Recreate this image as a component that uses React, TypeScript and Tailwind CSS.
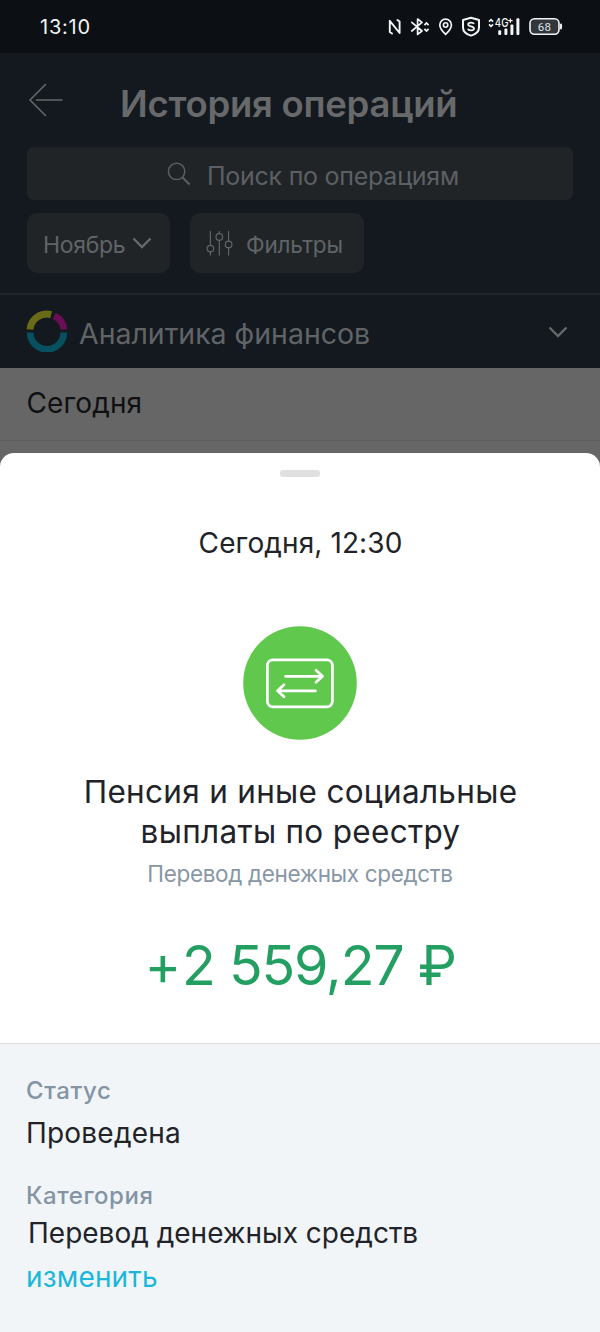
import React from "react";

function StatusIcons() {
  return (
    <svg width="180" height="26" viewBox="385 14 180 26" fill="none" stroke="#f2f4f6" strokeWidth="1.7" className="ml-auto mr-[35px]">
      {/* NFC */}
      <path d="M392 33.6 L389.8 32 V20.8 L399.6 33 V21.6 L397.4 20" strokeLinejoin="round" strokeLinecap="round" strokeWidth="1.9" />
      {/* Bluetooth */}
      <path d="M411.8 22.4 L422 31 L417.6 34.4 V19 L422 22.4 L411.8 31" strokeLinejoin="round" strokeLinecap="round" strokeWidth="1.7" />
      <path d="M424.4 25.2 L426.5 23 L428.6 25.2 M424.4 28.8 L426.5 31 L428.6 28.8" strokeWidth="1.8" />
      {/* Location */}
      <path d="M445.6 34.4 C442 31 439.8 28.3 439.8 25 a5.8 5.8 0 0 1 11.6 0 C451.4 28.3 449.2 31 445.6 34.4 Z" strokeWidth="1.7" />
      <circle cx="445.6" cy="25" r="2.2" strokeWidth="1.6" />
      {/* Shield */}
      <path d="M471 17.8 L479 20 V27.4 C479 31.4 475.6 34.2 471 35.6 C466.4 34.2 463 31.4 463 27.4 V20 Z" strokeWidth="2" strokeLinejoin="round" />
      <path d="M474 24 C473.3 22.2 468.2 22 468.2 24.4 C468.2 27 474 25.8 474 28.6 C474 31 468.6 30.9 468 28.8" strokeWidth="1.7" />
      {/* Signal */}
      <path d="M489 21.6 L491 19.6 L493 21.6 M489 24.4 L491 26.4 L493 24.4" strokeWidth="1.6" />
      <g stroke="none" fill="#f2f4f6">
        <rect x="498.2" y="30.3" width="3" height="4.7" rx="1" />
        <rect x="504.4" y="28.4" width="3" height="6.6" rx="1" />
        <rect x="510.4" y="24.4" width="3" height="10.6" rx="1" />
        <rect x="516.4" y="18.3" width="3" height="16.7" rx="1" />
        <text x="494.8" y="26.8" fontFamily="Inter, sans-serif" fontSize="11.5" fontWeight="500" textLength="13.6" lengthAdjust="spacingAndGlyphs">4G</text>
        <path d="M508.2 20 H512.6 V21.2 H508.2 Z M509.8 18.4 H511 V22.8 H509.8 Z" />
      </g>
      {/* Battery */}
      <rect x="530" y="18.8" width="29" height="15.4" rx="4.4" strokeWidth="1.6" fill="#33373c" />
      <path d="M560.6 23.8 Q562 26.5 560.6 29.2" strokeWidth="2" />
      <text x="544.4" y="30.6" textAnchor="middle" stroke="none" fill="#dfe2e5" fontFamily="Roboto, sans-serif" fontSize="11.5" letterSpacing="0.3">68</text>
    </svg>
  );
}

function Chevron({ className }: { className: string }) {
  return (
    <svg width="20" height="12" viewBox="0 0 20 12" fill="none" strokeWidth="2.3" className={className}>
      <path d="M1.5 1.5 L10 10 L18.5 1.5" stroke="currentColor" />
    </svg>
  );
}

function Header() {
  return (
    <header className="flex flex-col h-[315px] bg-[#14191f]">
      <div className="flex h-[94px] items-center">
        <svg width="36" height="34" viewBox="0 0 36 34" fill="none" stroke="#66696c" strokeWidth="1.5" strokeLinecap="round" className="ml-7">
          <path d="M17.5 1.5 L2 17 L17.5 32.5 M8.5 17 H34" />
        </svg>
        <h1 className="ml-[56px] pt-[7px] text-[36.5px] leading-[40px] font-[580] tracking-[-0.26px] text-[#68696b] whitespace-nowrap">История операций</h1>
      </div>
      <div className="mx-[27px] flex h-[53px] shrink-0 items-center rounded-[7px] bg-[#202427]">
        <svg width="24" height="24" viewBox="0 0 24 24" fill="none" stroke="#5a5d60" className="ml-[140px]">
          <circle cx="9.6" cy="9.4" r="8.2" strokeWidth="1.5" />
          <path d="M15.6 15.6 L22.6 22.4" strokeWidth="2.1" />
        </svg>
        <span className="ml-[16px] pt-[5px] text-[25px] leading-[30px] font-normal tracking-[-0.26px] text-[#5d6063] whitespace-nowrap">Поиск по операциям</span>
      </div>
      <div className="mt-[13px] flex h-[60px] shrink-0 gap-5 px-[27px]">
        <button className="flex w-[143px] items-center rounded-[10px] bg-[#202427] pl-[16px] text-[#67696b]">
          <span className="pt-[4px] text-[23px] leading-[28px] font-normal tracking-[-0.3px] text-[#616467]">Ноябрь</span>
          <Chevron className="ml-[7px]" />
        </button>
        <button className="flex w-[174px] items-center rounded-[10px] bg-[#202427] pl-[16px]">
          <svg width="28" height="27" viewBox="0 0 28 27" fill="none" stroke="#606366" strokeWidth="1.2">
            <path d="M4.4 1 V15.2 M4.4 22 V25.6 M13.3 1 V3.6 M13.3 10.3 V25.6 M22.6 1 V11.2 M22.6 17.6 V25.6" />
            <circle cx="4.4" cy="18.6" r="3.3" />
            <circle cx="13.3" cy="7" r="3.3" />
            <circle cx="22.6" cy="14.4" r="3.3" />
          </svg>
          <span className="ml-[12px] pt-[4px] text-[22.5px] leading-[28px] font-normal tracking-[-0.2px] text-[#616467]">Фильтры</span>
        </button>
      </div>
      <div className="mt-[20px] flex h-[75px] items-center border-t-2 border-[#20252d]">
        <svg width="42" height="42" viewBox="-21 -21 42 42" fill="none" strokeWidth="6.8" className="ml-[26px] mb-[1px]">
          <path d="M-17 -1.5 A16.8 16.8 0 0 1 4.1 -16.4" stroke="#6a6b17" />
          <path d="M7.4 -15.2 A16.8 16.8 0 0 1 17 -1.5" stroke="#6a0f55" />
          <path d="M16.8 1.5 A16.8 16.8 0 0 1 -16.8 1.5" stroke="#06505f" />
        </svg>
        <span className="ml-[11px] pt-[4px] text-[28.5px] leading-[34px] font-normal tracking-[-0.02px] text-[#616467] whitespace-nowrap">Аналитика финансов</span>
        <Chevron className="ml-auto mr-[32px] text-[#67696b]" />
      </div>
    </header>
  );
}

export default function App() {
  return (
    <div className="flex h-[1332px] w-[600px] flex-col overflow-hidden bg-[#666666] font-[Inter,sans-serif]">
      <div className="flex h-[53px] shrink-0 items-center bg-[#0c1014]">
        <span className="pl-[40px] text-[20px] leading-6 font-normal tracking-[0.78px] text-[#f2f4f6]">13:10</span>
        <StatusIcons />
      </div>
      <Header />
      <div className="h-[73px] shrink-0 border-b border-[#5c5c5c] pl-[26.5px] pt-[18px] text-[28px] leading-[34px] font-[380] tracking-[0.1px] text-[#0e1013]">Сегодня</div>
      <main className="mt-[12px] flex flex-1 flex-col overflow-hidden rounded-t-[14px] bg-white text-[#212328]">
        <section className="flex h-[590px] shrink-0 flex-col items-center text-center">
          <div className="mt-[17px] h-[7px] w-10 rounded-[3px] bg-[#e0e0e0]" />
          <div className="mt-[48px] pl-px text-[28px] leading-[36px] font-[380] tracking-[0.1px]">Сегодня, 12:30</div>
          <svg width="114" height="114" viewBox="0 0 114 114" fill="none" stroke="white" strokeLinecap="round" strokeLinejoin="round" className="mt-[65px]">
            <circle cx="57" cy="57" r="56.8" fill="#60c84c" stroke="none" />
            <rect x="24.4" y="33.8" width="65" height="47" rx="5.5" strokeWidth="2.7" />
            <path d="M42.5 50.3 H79.5 M73 44.3 L79.5 50.3 L73 56.3 M72.5 64.8 H34.5 M41 58.8 L34.5 64.8 L41 70.8" strokeWidth="2.7" />
          </svg>
          <h2 className="mt-[32px] w-[500px] pl-[1px] text-[31.5px] leading-[40px] font-[380] tracking-[0.3px]">
            Пенсия и иные социальные<br />выплаты по реестру
          </h2>
          <p className="mt-[7px] text-[22.5px] leading-[30px] font-[380] tracking-[-0.34px] text-[#8797a5]">Перевод денежных средств</p>
          <p className="mt-[41px] text-[55.5px] leading-[70px] font-[380] tracking-[-1.2px] text-[#229f61]"><span className="mr-[2px]">+</span>2 559,27 ₽</p>
        </section>
        <section className="flex flex-1 flex-col items-start border-t border-[#d9dde1] bg-[#f1f5f8] pl-[26px]">
          <h3 className="mt-[31px] text-[24px] leading-[32px] font-medium tracking-[0.6px] text-[#8494a4]">Статус</h3>
          <p className="mt-[8px] text-[28px] leading-[36px] font-[380] tracking-[0.2px]">Проведена</p>
          <h3 className="mt-[29px] text-[24px] leading-[32px] font-medium tracking-[0.53px] text-[#8494a4]">Категория</h3>
          <p className="mt-[3px] pl-[2px] text-[28px] leading-[36px] font-[380] tracking-[0px] whitespace-nowrap">Перевод денежных средств</p>
          <button className="mt-[8px] text-[28px] leading-[36px] font-normal tracking-[0.15px] text-[#1bb7db]">изменить</button>
        </section>
      </main>
    </div>
  );
}
